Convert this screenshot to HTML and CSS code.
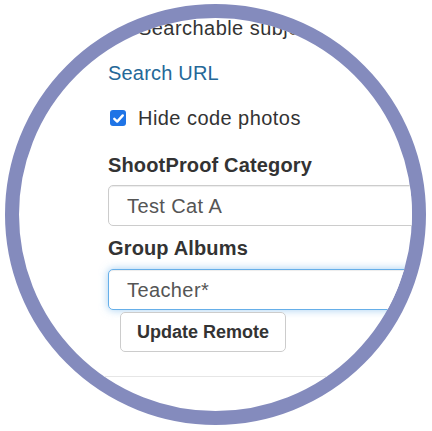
FILE: index.html
```html
<!DOCTYPE html>
<html>
<head>
<meta charset="utf-8">
<link rel="stylesheet" href="styles.css">
</head>
<body>
<div class="lens">
  <div class="form">
    <div class="check-row first">
      <span class="box"><svg viewBox="0 0 15 15" width="15" height="15"><path d="M3.3 7.8 L6.2 10.6 L11.8 4.4" fill="none" stroke="#fff" stroke-width="2.4" stroke-linecap="round" stroke-linejoin="round"/></svg></span>
      <span class="check-text">Searchable subjects</span>
    </div>
    <a class="link" href="#">Search URL</a>
    <div class="check-row">
      <span class="box"><svg viewBox="0 0 15 15" width="15" height="15"><path d="M3.3 7.8 L6.2 10.6 L11.8 4.4" fill="none" stroke="#fff" stroke-width="2.4" stroke-linecap="round" stroke-linejoin="round"/></svg></span>
      <span class="check-text">Hide code photos</span>
    </div>
    <div class="label label-first">ShootProof Category</div>
    <div class="field">Test Cat A</div>
    <div class="label">Group Albums</div>
    <div class="field focused">Teacher*</div>
    <div class="actions"><button class="btn" type="button">Update Remote</button></div>
  </div>
  <div class="divider"></div>
</div>
</body>
</html>
```

FILE: styles.css
```css
html, body {
  margin: 0;
  padding: 0;
  background: #ffffff;
}
body {
  font-family: "Liberation Sans", Arial, sans-serif;
  font-size: 20px;
  line-height: 20px;
  color: #333333;
}
.lens {
  box-sizing: border-box;
  width: 421px;
  height: 421px;
  margin: 4px 0 0 5px;
  border: 14px solid #848bbd;
  border-radius: 50%;
  overflow: hidden;
  background: #ffffff;
}
.form {
  display: flex;
  flex-direction: column;
  align-items: flex-start;
  padding-left: 89px;
}
.check-row {
  display: flex;
  align-items: center;
  height: 20px;
  margin-top: 25px;
  white-space: nowrap;
}
.check-row.first {
  margin-top: 0;
}
.box {
  display: flex;
  width: 16px;
  height: 16px;
  margin-left: 2px;
  margin-right: 12px;
  border-radius: 3px;
  background: #1f74e6;
  align-items: center;
  justify-content: center;
}
.check-text {
  color: #333333;
  letter-spacing: 0.45px;
}
.link {
  display: block;
  margin-top: 25px;
  height: 20px;
  color: #256898;
  text-decoration: none;
  letter-spacing: 0.2px;
}
.label {
  font-weight: bold;
  height: 20px;
  margin-top: 12px;
  white-space: nowrap;
  letter-spacing: 0.15px;
}
.label-first {
  margin-top: 27px;
}
.field {
  box-sizing: border-box;
  display: flex;
  align-items: center;
  width: 420px;
  height: 41px;
  margin-top: 10px;
  padding: 0 18px;
  border: 1px solid #cccccc;
  border-radius: 5px;
  color: #555555;
  background: #ffffff;
  letter-spacing: 0.4px;
  box-shadow: inset 0 1px 1px rgba(0, 0, 0, 0.075);
}
.field.focused {
  margin-top: 11px;
  border-color: #66afe9;
  box-shadow: inset 0 1px 1px rgba(0, 0, 0, 0.075), 0 0 8px rgba(102, 175, 233, 0.6);
}
.actions {
  margin-top: 2px;
  padding-left: 12px;
}
.btn {
  box-sizing: border-box;
  height: 40px;
  padding: 0 16px;
  border: 1px solid #cccccc;
  border-radius: 5px;
  background: #ffffff;
  font-family: "Liberation Sans", Arial, sans-serif;
  font-size: 18px;
  font-weight: bold;
  color: #333333;
}
.divider {
  margin-top: 24px;
  border-top: 1px solid #e6e6e6;
}
```
